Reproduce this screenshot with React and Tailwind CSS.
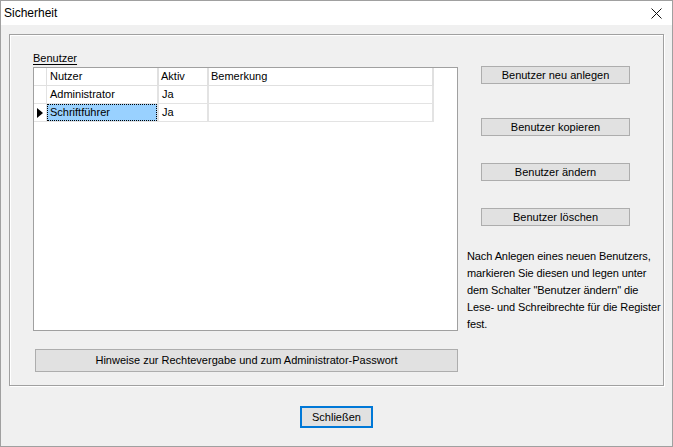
import React from 'react';

const FONT = { fontFamily: '"Liberation Sans", Arial, sans-serif' };

const USERS = [
  { name: 'Administrator', active: 'Ja', note: '' },
  { name: 'Schriftführer', active: 'Ja', note: '', current: true },
];

const HINT = [
  'Nach Anlegen eines neuen Benutzers,',
  'markieren Sie diesen und legen unter',
  'dem Schalter "Benutzer ändern" die',
  'Lese- und Schreibrechte für die Register',
  'fest.',
];

function Btn({ children, className = '' }) {
  return (
    <div className={`flex items-center justify-center bg-[#e1e1e1] border border-[#adadad] text-[11px] text-black ${className}`}>
      {children}
    </div>
  );
}

function Grid() {
  return (
    <div className="w-[425px] h-[264px] bg-white border border-[#a0a0a0] text-[11px] leading-[17px]">
      {/* header */}
      <div className="flex h-[18px] w-[400px]">
        <div className="w-[13px] border-r border-b border-[#e0e0e0]" />
        <div className="w-[112px] pl-[3px] border-r-2 border-b border-[#e0e0e0]">Nutzer</div>
        <div className="w-[50px] pl-[2px] border-r-2 border-b border-[#e0e0e0]">Aktiv</div>
        <div className="w-[225px] pl-[2px] border-r-2 border-b border-[#e0e0e0]">Bemerkung</div>
      </div>
      {USERS.map(u => (
        <div key={u.name} className="flex h-[18px] w-[400px]">
          <div className="w-[13px] border-r border-b border-[#e3e3e3] flex items-center pl-[3px]">
            {u.current && (
              <svg width="6" height="10" viewBox="0 0 6 10"><path d="M0 0L6 5L0 10Z" fill="#000" /></svg>
            )}
          </div>
          <div className="w-[112px] border-r-2 border-b border-[#e3e3e3]">
            <div className={u.current ? 'h-full pl-[2px] bg-[#99d1ff] border border-dotted border-black leading-[15px]' : 'pl-[3px]'}>
              {u.name}
            </div>
          </div>
          <div className="w-[50px] pl-[3px] border-r-2 border-b border-[#e3e3e3]">{u.active}</div>
          <div className="w-[225px] pl-[2px] border-r-2 border-b border-[#e3e3e3]">{u.note}</div>
        </div>
      ))}
    </div>
  );
}

export default function App() {
  return (
    <div style={FONT} className="w-[673px] h-[447px] flex flex-col border border-[#a0a0a0] bg-[#f0f0f0] text-black">
      {/* title bar */}
      <div className="h-[24px] bg-white flex items-center justify-between pl-[3px] pr-[10px]">
        <span className="text-[12px]">Sicherheit</span>
        <svg width="11" height="11" viewBox="0 0 11 11">
          <path d="M0.5 0.5L10.5 10.5M10.5 0.5L0.5 10.5" stroke="#111" strokeWidth="1" />
        </svg>
      </div>

      {/* group box */}
      <div className="ml-[8px] mt-[9px] w-[655px] h-[352px] border border-[#a0a0a0] shadow-[1px_1px_0_#fff,inset_1px_1px_0_#fff] flex">
        <div className="pl-[23px] flex flex-col">
          <div className="mt-[15px] h-[16px] leading-[16px] text-[11px] underline underline-offset-2">Benutzer</div>
          <div className="mt-[1px]"><Grid /></div>
          <Btn className="mt-[18px] ml-[2px] w-[423px] h-[23px]">Hinweise zur Rechtevergabe und zum Administrator-Passwort</Btn>
        </div>
        <div className="ml-[9px] pt-[31px] flex flex-col">
          <Btn className="ml-[14px] w-[149px] h-[18px]">Benutzer neu anlegen</Btn>
          <Btn className="ml-[14px] mt-[34px] w-[149px] h-[18px]">Benutzer kopieren</Btn>
          <Btn className="ml-[14px] mt-[27px] w-[149px] h-[18px]">Benutzer ändern</Btn>
          <Btn className="ml-[14px] mt-[27px] w-[149px] h-[18px]">Benutzer löschen</Btn>
          <div className="mt-[22px] text-[11px] leading-[17px] whitespace-nowrap tracking-[-0.1px]">
            {HINT.map(l => <div key={l}>{l}</div>)}
          </div>
        </div>
      </div>

      {/* footer */}
      <div className="flex justify-center mt-[20px]">
        <div className="w-[73px] h-[22px] border-2 border-[#0078d7] bg-[#e1e1e1] flex items-center justify-center text-[11px]">
          Schließen
        </div>
      </div>
    </div>
  );
}
